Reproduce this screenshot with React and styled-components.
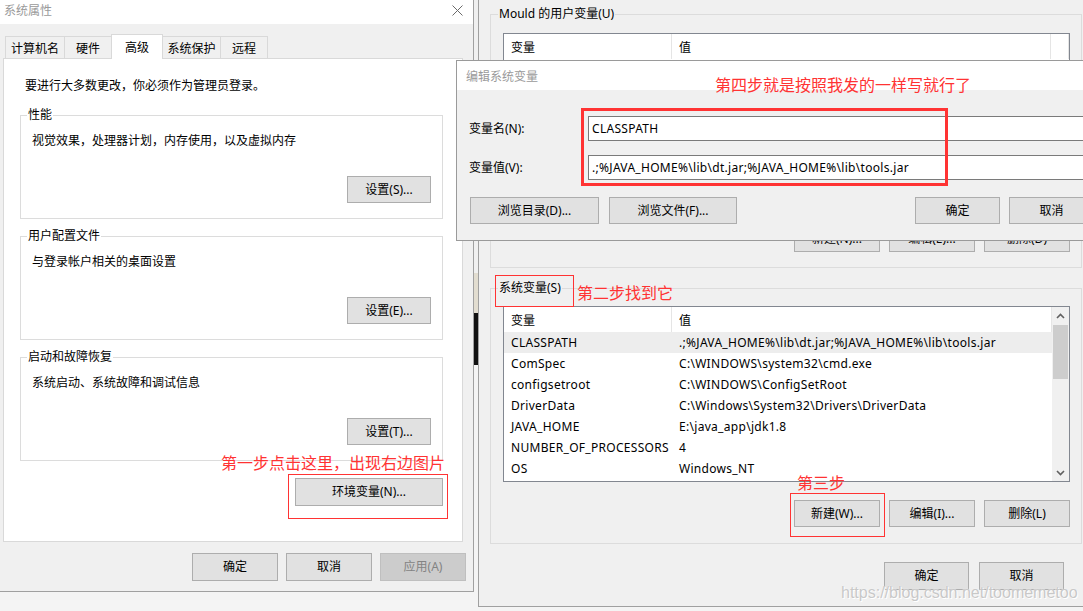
import React from 'react';
import styled, { createGlobalStyle } from 'styled-components';

const UI_FONT = `"Noto Sans", "Noto Sans CJK SC", sans-serif`;
const RED = '#ff3333';

const GlobalStyle = createGlobalStyle`
  html, body { margin: 0; padding: 0; }
  body {
    background: #f4f4f4;
    font-family: ${UI_FONT};
    font-size: 12px;
    color: #000;
    overflow: hidden;
  }
  * { box-sizing: border-box; }
`;

const Desktop = styled.div`
  position: relative;
  width: 1083px;
  height: 611px;
  overflow: hidden;
  background: #f4f4f4;
`;

const DesktopStrip = styled.div`
  position: absolute;
  left: 474px;
  top: 0;
  width: 4px;
  height: 611px;
  display: flex;
  flex-direction: column;
`;

const StripPart = styled.div`
  height: ${(p) => p.$h}px;
  background: ${(p) => p.$c};
`;

/* ---------- generic window parts ---------- */

const Window = styled.div`
  position: absolute;
  left: ${(p) => p.$x}px;
  top: ${(p) => p.$y}px;
  width: ${(p) => p.$w}px;
  height: ${(p) => p.$h}px;
  background: #f0f0f0;
  display: flex;
  flex-direction: column;
  overflow: hidden;
`;

const SysWindow = styled(Window)`
  border-right: 1px solid #a0a0a0;
  border-bottom: 1px solid #a0a0a0;
`;

const EnvWindow = styled(Window)`
  border-left: 1px solid #a0a0a0;
  border-bottom: 1px solid #a0a0a0;
`;

const DialogWindow = styled(Window)`
  border: 1px solid #9a9a9a;
  z-index: 5;
`;

const TitleBar = styled.div`
  height: ${(p) => p.$h}px;
  flex: none;
  background: #fff;
  display: flex;
  align-items: center;
  justify-content: space-between;
  padding: 0 10px ${(p) => p.$pb || 0}px ${(p) => p.$pl}px;
  color: #9a9a9a;
  font-size: 12px;
`;

const CloseIcon = () => (
  <svg width="11" height="11" viewBox="0 0 11 11">
    <path d="M0.5 0.5 L10.5 10.5 M10.5 0.5 L0.5 10.5" stroke="#6a6a6a" strokeWidth="1" fill="none" />
  </svg>
);

const Button = styled.button`
  width: ${(p) => p.$w}px;
  height: ${(p) => p.$h || 27}px;
  flex: none;
  margin: 0;
  padding: 0;
  background: ${(p) => (p.disabled ? '#cccccc' : '#e1e1e1')};
  border: 1px solid ${(p) => (p.disabled ? '#bfbfbf' : '#adadad')};
  color: ${(p) => (p.disabled ? '#838383' : '#000')};
  font-family: ${UI_FONT};
  font-size: 12px;
  line-height: 16px;
  display: flex;
  align-items: center;
  justify-content: center;
`;

const ButtonRow = styled.div`
  display: flex;
  justify-content: ${(p) => p.$justify || 'flex-end'};
  gap: ${(p) => p.$gap || 9}px;
  margin-top: ${(p) => p.$mt || 0}px;
  padding-right: ${(p) => p.$pr || 0}px;
`;

/* ---------- left: 系统属性 ---------- */

const SysBody = styled.div`
  flex: 1;
  display: flex;
  flex-direction: column;
  padding: 10px 0 0 3px;
`;

const TabStrip = styled.div`
  display: flex;
  align-items: flex-end;
  height: 24px;
  padding-left: 2px;
  position: relative;
  z-index: 2;
`;

const Tab = styled.div`
  width: ${(p) => p.$w}px;
  height: ${(p) => (p.$active ? 25 : 22)}px;
  margin-left: -1px;
  margin-bottom: ${(p) => (p.$active ? -1 : 0)}px;
  border: 1px solid #d9d9d9;
  border-bottom: none;
  background: ${(p) => (p.$active ? '#fff' : '#f0f0f0')};
  position: relative;
  z-index: ${(p) => (p.$active ? 2 : 1)};
  display: flex;
  align-items: center;
  justify-content: center;
  white-space: nowrap;
  &:first-child { margin-left: 0; }
`;

const TabPanel = styled.div`
  height: 484px;
  margin-right: 10px;
  background: #fff;
  border: 1px solid #d9d9d9;
  padding: 19px 19px 0 16px;
  display: flex;
  flex-direction: column;
`;

const Intro = styled.div`
  line-height: 16px;
  padding-left: 5px;
  margin-bottom: 21px;
`;

const GroupStack = styled.div`
  display: flex;
  flex-direction: column;
  gap: ${(p) => p.$gap}px;
`;

const GroupBox = styled.div`
  position: relative;
  border: 1px solid #dcdcdc;
  padding: ${(p) => p.$pad};
  display: flex;
  flex-direction: column;
`;

const GroupTitle = styled.span`
  position: absolute;
  left: ${(p) => p.$left || 6}px;
  top: -9px;
  padding: 0 1px;
  line-height: 16px;
  background: ${(p) => p.$bg || '#fff'};
  white-space: nowrap;
`;

const GroupText = styled.div`
  line-height: 16px;
  margin-bottom: 27px;
`;

const SysFooter = styled(ButtonRow)`
  margin-top: 11px;
  padding-right: 7px;
`;

/* ---------- right: 环境变量 ---------- */

const EnvBody = styled.div`
  flex: 1;
  display: flex;
  flex-direction: column;
  padding: 14px 12px 0 11px;
`;

const VarGroup = styled(GroupBox)`
  border-color: #dcdcdc;
  margin-top: ${(p) => p.$mt || 0}px;
`;

const VarList = styled.div`
  height: ${(p) => p.$h}px;
  flex: none;
  border: 1px solid #828790;
  background: #fff;
  display: flex;
  overflow: hidden;
`;

const ListMain = styled.div`
  flex: 1;
  min-width: 0;
  display: flex;
  flex-direction: column;
`;

const HeaderRow = styled.div`
  display: grid;
  grid-template-columns: ${(p) => p.$cols};
  height: 25px;
  flex: none;
`;

const HeaderCell = styled.div`
  border-right: 1px solid #e5e5e5;
  padding-left: 7px;
  display: flex;
  align-items: center;
`;

const Row = styled.div`
  display: grid;
  grid-template-columns: 168px 1fr;
  height: 21px;
  flex: none;
  align-items: center;
  background: ${(p) => (p.$selected ? '#ededed' : 'transparent')};
`;

const Cell = styled.div`
  padding-left: 7px;
  white-space: nowrap;
  overflow: hidden;
  letter-spacing: 0.3px;
`;

const Scrollbar = styled.div`
  width: 17px;
  flex: none;
  background: #f0f0f0;
  display: flex;
  flex-direction: column;
  align-items: center;
`;

const ScrollArrow = styled.div`
  height: 17px;
  width: 17px;
  display: flex;
  align-items: center;
  justify-content: center;
`;

const ScrollThumb = styled.div`
  width: 15px;
  height: 54px;
  margin-top: 1px;
  background: #cdcdcd;
`;

const ScrollSpacer = styled.div`
  flex: 1;
`;

const Chevron = ({ down }) => (
  <svg width="9" height="6" viewBox="0 0 9 6">
    <path
      d={down ? 'M1 1 L4.5 4.5 L8 1' : 'M1 5 L4.5 1.5 L8 5'}
      stroke="#606060"
      strokeWidth="1.6"
      fill="none"
    />
  </svg>
);

const EnvFooter = styled(ButtonRow)`
  margin-top: 18px;
  padding-right: 18px;
`;

/* ---------- dialog: 编辑系统变量 ---------- */

const DialogBody = styled.div`
  flex: 1;
  display: flex;
  flex-direction: column;
  padding: 26px 11px 0 12px;
`;

const FieldRow = styled.div`
  display: grid;
  grid-template-columns: 119px 1fr;
  align-items: center;
  height: 25px;
  margin-bottom: ${(p) => p.$mb || 0}px;
`;

const FieldLabel = styled.label`
  line-height: 16px;
  white-space: nowrap;
`;

const FieldInput = styled.div`
  height: 25px;
  border: 1px solid #7a7a7a;
  background: #fff;
  padding-left: 3px;
  display: flex;
  align-items: center;
  white-space: nowrap;
  letter-spacing: 0.3px;
`;

const DialogButtons = styled.div`
  display: flex;
  align-items: center;
  margin-top: 17px;
  padding-left: 1px;
`;

const ButtonGroup = styled.div`
  display: flex;
  gap: ${(p) => p.$gap}px;
  margin-left: ${(p) => (p.$push ? 'auto' : '0')};
`;

/* ---------- annotations ---------- */

const Note = styled.div`
  position: absolute;
  left: ${(p) => p.$x}px;
  top: ${(p) => p.$y}px;
  color: ${RED};
  font-family: "Noto Sans CJK SC", sans-serif;
  font-weight: 400;
  font-size: 16px;
  line-height: 22px;
  white-space: nowrap;
  z-index: 10;
`;

const Mark = styled.div`
  position: absolute;
  left: ${(p) => p.$x}px;
  top: ${(p) => p.$y}px;
  width: ${(p) => p.$w}px;
  height: ${(p) => p.$h}px;
  border: ${(p) => p.$t || 1}px solid ${RED};
  z-index: 10;
  pointer-events: none;
`;

const Watermark = styled.div`
  position: absolute;
  left: 841px;
  top: 583px;
  font-family: "Liberation Sans", Arial, sans-serif;
  font-size: 16px;
  line-height: 20px;
  color: #c8c8c8;
  text-shadow: 0 0 1px #ffffff, 1px 1px 0 #ffffff;
  white-space: nowrap;
  z-index: 10;
`;

/* ---------- data ---------- */

const tabs = [
  { label: '计算机名', w: 60 },
  { label: '硬件', w: 48 },
  { label: '高级', w: 52, active: true },
  { label: '系统保护', w: 59 },
  { label: '远程', w: 48 },
];

const groups = [
  { title: '性能', text: '视觉效果，处理器计划，内存使用，以及虚拟内存', btn: '设置(S)...' },
  { title: '用户配置文件', text: '与登录帐户相关的桌面设置', btn: '设置(E)...' },
  { title: '启动和故障恢复', text: '系统启动、系统故障和调试信息', btn: '设置(T)...' },
];

const sysVars = [
  ['CLASSPATH', '.;%JAVA_HOME%\\lib\\dt.jar;%JAVA_HOME%\\lib\\tools.jar'],
  ['ComSpec', 'C:\\WINDOWS\\system32\\cmd.exe'],
  ['configsetroot', 'C:\\WINDOWS\\ConfigSetRoot'],
  ['DriverData', 'C:\\Windows\\System32\\Drivers\\DriverData'],
  ['JAVA_HOME', 'E:\\java_app\\jdk1.8'],
  ['NUMBER_OF_PROCESSORS', '4'],
  ['OS', 'Windows_NT'],
];

export default function App() {
  return (
    <>
      <GlobalStyle />
      <Desktop>
        <DesktopStrip>
          <StripPart $h={273} $c="#f0f0f0" />
          <StripPart $h={40} $c="#e2ddd0" />
          <StripPart $h={52} $c="#111111" />
          <StripPart $h={18} $c="#f4f4f4" />
        </DesktopStrip>

        {/* 系统属性 */}
        <SysWindow $x={0} $y={0} $w={474} $h={592}>
          <TitleBar $h={24} $pl={4} $pb={4}>
            <span>系统属性</span>
            <CloseIcon />
          </TitleBar>
          <SysBody>
            <TabStrip>
              {tabs.map((t) => (
                <Tab key={t.label} $w={t.w} $active={t.active}>
                  {t.label}
                </Tab>
              ))}
            </TabStrip>
            <TabPanel>
              <Intro>要进行大多数更改，你必须作为管理员登录。</Intro>
              <GroupStack $gap={17}>
                {groups.map((g) => (
                  <GroupBox key={g.title} $pad="17px 11px 15px 11px">
                    <GroupTitle>{g.title}</GroupTitle>
                    <GroupText>{g.text}</GroupText>
                    <ButtonRow>
                      <Button $w={84}>{g.btn}</Button>
                    </ButtonRow>
                  </GroupBox>
                ))}
              </GroupStack>
              <ButtonRow $mt={17}>
                <Button $w={148} $h={28}>环境变量(N)...</Button>
              </ButtonRow>
            </TabPanel>
            <SysFooter $gap={8}>
              <Button $w={86} $h={28}>确定</Button>
              <Button $w={86} $h={28}>取消</Button>
              <Button $w={86} $h={28} disabled>应用(A)</Button>
            </SysFooter>
          </SysBody>
        </SysWindow>

        {/* 环境变量 */}
        <EnvWindow $x={478} $y={0} $w={616} $h={607}>
          <EnvBody>
            <VarGroup $pad="18px 11px 15px 12px">
              <GroupTitle $left={7} $bg="#f0f0f0">Mould 的用户变量(U)</GroupTitle>
              <VarList $h={173}>
                <ListMain>
                  <HeaderRow $cols="168px 379px 1fr">
                    <HeaderCell>变量</HeaderCell>
                    <HeaderCell>值</HeaderCell>
                    <HeaderCell />
                  </HeaderRow>
                </ListMain>
              </VarList>
              <ButtonRow $mt={19} $gap={9}>
                <Button $w={86}>新建(N)...</Button>
                <Button $w={86}>编辑(E)...</Button>
                <Button $w={86}>删除(D)</Button>
              </ButtonRow>
            </VarGroup>

            <VarGroup $mt={20} $pad="17px 11px 16px 12px">
              <GroupTitle $left={7} $bg="#f0f0f0">系统变量(S)</GroupTitle>
              <VarList $h={176}>
                <ListMain>
                  <HeaderRow $cols="168px 1fr">
                    <HeaderCell>变量</HeaderCell>
                    <HeaderCell>值</HeaderCell>
                  </HeaderRow>
                  {sysVars.map(([k, v], i) => (
                    <Row key={k} $selected={i === 0}>
                      <Cell>{k}</Cell>
                      <Cell>{v}</Cell>
                    </Row>
                  ))}
                </ListMain>
                <Scrollbar>
                  <ScrollArrow>
                    <Chevron />
                  </ScrollArrow>
                  <ScrollThumb />
                  <ScrollSpacer />
                  <ScrollArrow>
                    <Chevron down />
                  </ScrollArrow>
                </Scrollbar>
              </VarList>
              <ButtonRow $mt={18} $gap={9}>
                <Button $w={86}>新建(W)...</Button>
                <Button $w={86}>编辑(I)...</Button>
                <Button $w={86}>删除(L)</Button>
              </ButtonRow>
            </VarGroup>

            <EnvFooter $gap={10}>
              <Button $w={85} $h={28}>确定</Button>
              <Button $w={85} $h={28}>取消</Button>
            </EnvFooter>
          </EnvBody>
        </EnvWindow>

        {/* 编辑系统变量 */}
        <DialogWindow $x={456} $y={60} $w={650} $h={181}>
          <TitleBar $h={29} $pl={9}>
            <span>编辑系统变量</span>
          </TitleBar>
          <DialogBody>
            <FieldRow $mb={14}>
              <FieldLabel>变量名(N):</FieldLabel>
              <FieldInput>CLASSPATH</FieldInput>
            </FieldRow>
            <FieldRow>
              <FieldLabel>变量值(V):</FieldLabel>
              <FieldInput>.;%JAVA_HOME%\lib\dt.jar;%JAVA_HOME%\lib\tools.jar</FieldInput>
            </FieldRow>
            <DialogButtons>
              <ButtonGroup $gap={10}>
                <Button $w={129}>浏览目录(D)...</Button>
                <Button $w={128}>浏览文件(F)...</Button>
              </ButtonGroup>
              <ButtonGroup $gap={9} $push>
                <Button $w={85}>确定</Button>
                <Button $w={85}>取消</Button>
              </ButtonGroup>
            </DialogButtons>
          </DialogBody>
        </DialogWindow>

        {/* annotations */}
        <Note $x={221} $y={451}>第一步点击这里，出现右边图片</Note>
        <Mark $x={288} $y={474} $w={160} $h={45} />
        <Note $x={577} $y={281}>第二步找到它</Note>
        <Mark $x={495} $y={275} $w={79} $h={32} />
        <Note $x={797} $y={471}>第三步</Note>
        <Mark $x={790} $y={493} $w={95} $h={44} />
        <Note $x={715} $y={73}>第四步就是按照我发的一样写就行了</Note>
        <Mark $x={581} $y={108} $w={367} $h={78} $t={3} />

        <Watermark>https://blog.csdn.net/toomemetoo</Watermark>
      </Desktop>
    </>
  );
}
